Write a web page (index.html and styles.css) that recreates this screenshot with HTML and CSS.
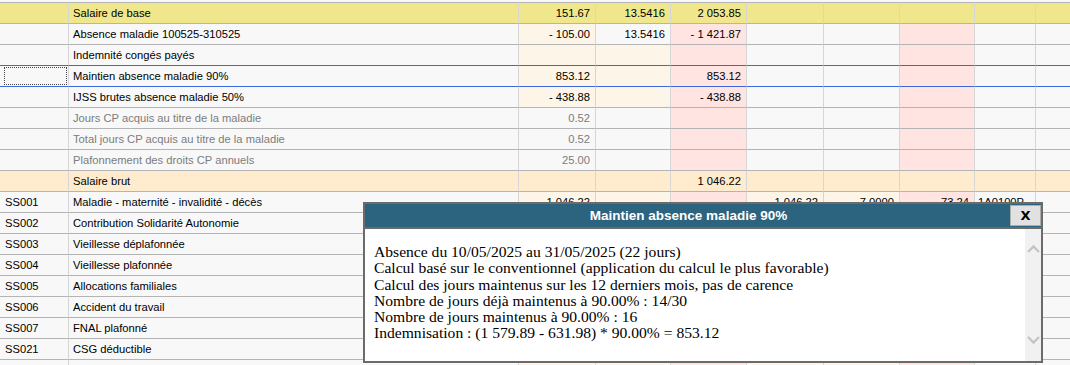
FILE: index.html
```html
<!DOCTYPE html>
<html lang="fr">
<head>
<meta charset="utf-8">
<title>Bulletin</title>
<link rel="stylesheet" href="styles.css">
</head>
<body>
<div class="page">
<table class="grid">
  <colgroup>
    <col class="w-code"><col class="w-label"><col class="w-n1"><col class="w-n2"><col class="w-n3"><col class="w-n4"><col class="w-n5"><col class="w-n6"><col class="w-n7"><col class="w-n8">
  </colgroup>
  <tbody>
    <tr class="r-yellow r-first">
      <td></td><td class="lbl">Salaire de base</td><td class="num">151.67</td><td class="num">13.5416</td><td class="num">2 053.85</td><td></td><td></td><td></td><td></td><td></td>
    </tr>
    <tr>
      <td></td><td class="lbl">Absence maladie 100525-310525</td><td class="num cream">- 105.00</td><td class="num">13.5416</td><td class="num pink">- 1 421.87</td><td></td><td></td><td class="pink"></td><td></td><td></td>
    </tr>
    <tr class="r-before-sel">
      <td></td><td class="lbl">Indemnité congés payés</td><td class="cream"></td><td class="cream"></td><td class="pink"></td><td></td><td></td><td class="pink"></td><td></td><td></td>
    </tr>
    <tr class="r-sel">
      <td><span class="focus"></span></td><td class="lbl">Maintien absence maladie 90%</td><td class="num cream">853.12</td><td class="cream"></td><td class="num pink">853.12</td><td></td><td></td><td class="pink"></td><td></td><td></td>
    </tr>
    <tr>
      <td></td><td class="lbl">IJSS brutes absence maladie 50%</td><td class="num cream">- 438.88</td><td class="cream"></td><td class="num pink">- 438.88</td><td></td><td></td><td class="pink"></td><td></td><td></td>
    </tr>
    <tr class="r-grey">
      <td></td><td class="lbl">Jours CP acquis au titre de la maladie</td><td class="num">0.52</td><td></td><td class="pink"></td><td></td><td></td><td class="pink"></td><td></td><td></td>
    </tr>
    <tr class="r-grey">
      <td></td><td class="lbl">Total jours CP acquis au titre de la maladie</td><td class="num">0.52</td><td></td><td class="pink"></td><td></td><td></td><td class="pink"></td><td></td><td></td>
    </tr>
    <tr class="r-grey">
      <td></td><td class="lbl">Plafonnement des droits CP annuels</td><td class="num">25.00</td><td></td><td class="pink"></td><td></td><td></td><td class="pink"></td><td></td><td></td>
    </tr>
    <tr class="r-almond">
      <td></td><td class="lbl">Salaire brut</td><td></td><td></td><td class="num">1 046.22</td><td></td><td></td><td></td><td></td><td></td>
    </tr>
    <tr>
      <td class="code">SS001</td><td class="lbl">Maladie - maternité - invalidité - décès</td><td class="num cream">1 046.22</td><td class="cream"></td><td class="pink"></td><td class="num cream">1 046.22</td><td class="num cream">7.0000</td><td class="num pink">73.24</td><td class="org">1A0100P</td><td></td>
    </tr>
    <tr>
      <td class="code">SS002</td><td class="lbl">Contribution Solidarité Autonomie</td><td class="cream"></td><td class="cream"></td><td class="pink"></td><td class="cream"></td><td class="cream"></td><td class="pink"></td><td></td><td></td>
    </tr>
    <tr>
      <td class="code">SS003</td><td class="lbl">Vieillesse déplafonnée</td><td class="cream"></td><td class="cream"></td><td class="pink"></td><td class="cream"></td><td class="cream"></td><td class="pink"></td><td></td><td></td>
    </tr>
    <tr>
      <td class="code">SS004</td><td class="lbl">Vieillesse plafonnée</td><td class="cream"></td><td class="cream"></td><td class="pink"></td><td class="cream"></td><td class="cream"></td><td class="pink"></td><td></td><td></td>
    </tr>
    <tr>
      <td class="code">SS005</td><td class="lbl">Allocations familiales</td><td class="cream"></td><td class="cream"></td><td class="pink"></td><td class="cream"></td><td class="cream"></td><td class="pink"></td><td></td><td></td>
    </tr>
    <tr>
      <td class="code">SS006</td><td class="lbl">Accident du travail</td><td class="cream"></td><td class="cream"></td><td class="pink"></td><td class="cream"></td><td class="cream"></td><td class="pink"></td><td></td><td></td>
    </tr>
    <tr>
      <td class="code">SS007</td><td class="lbl">FNAL plafonné</td><td class="cream"></td><td class="cream"></td><td class="pink"></td><td class="cream"></td><td class="cream"></td><td class="pink"></td><td></td><td></td>
    </tr>
    <tr>
      <td class="code">SS021</td><td class="lbl">CSG déductible</td><td class="cream"></td><td class="cream"></td><td class="pink"></td><td class="cream"></td><td class="cream"></td><td class="pink"></td><td></td><td></td>
    </tr>
    <tr>
      <td class="code"></td><td class="lbl"></td><td class="cream"></td><td class="cream"></td><td class="pink"></td><td class="cream"></td><td class="cream"></td><td class="pink"></td><td></td><td></td>
    </tr>
  </tbody>
</table>

<div class="dialog">
  <div class="dlg-head">
    <div class="dlg-title">Maintien absence maladie 90%</div>
    <div class="dlg-close">X</div>
  </div>
  <div class="dlg-body">
    <div class="dlg-text">
      Absence du 10/05/2025 au 31/05/2025 (22 jours)<br>
      Calcul basé sur le conventionnel (application du calcul le plus favorable)<br>
      Calcul des jours maintenus sur les 12 derniers mois, pas de carence<br>
      Nombre de jours déjà maintenus à 90.00% : 14/30<br>
      Nombre de jours maintenus à 90.00% : 16<br>
      Indemnisation : (1 579.89 - 631.98) * 90.00% = 853.12
    </div>
    <div class="scrollbar">
      <svg class="chev" width="17" height="14" viewBox="0 0 17 14"><path d="M3 10 L8.5 4.5 L14 10" fill="none" stroke="#c4c4c4" stroke-width="2.4"/></svg>
      <svg class="chev" width="17" height="14" viewBox="0 0 17 14"><path d="M3 4 L8.5 9.5 L14 4" fill="none" stroke="#c4c4c4" stroke-width="2.4"/></svg>
    </div>
  </div>
</div>
</div>
</body>
</html>
```
FILE: styles.css
```css
html, body {
  margin: 0;
  padding: 0;
  background: #f8f8f8;
}
.page {
  position: relative;
  width: 1070px;
  height: 365px;
  overflow: hidden;
  padding-top: 2px;
  box-sizing: border-box;
  font-family: "Liberation Sans", Arial, sans-serif;
  font-size: 11.2px;
  color: #000;
}
.grid {
  border-collapse: separate;
  border-spacing: 0;
  table-layout: fixed;
  width: 1070px;
}
.w-code { width: 69px; }
.w-label { width: 450px; }
.w-n1 { width: 77px; }
.w-n2 { width: 75px; }
.w-n3 { width: 76px; }
.w-n4 { width: 77px; }
.w-n5 { width: 76px; }
.w-n6 { width: 75px; }
.w-n7 { width: 61px; }
.w-n8 { width: 34px; }
.grid td {
  height: 20px;
  padding: 0 4px;
  box-sizing: content-box;
  border-bottom: 1px solid #b4b4b4;
  border-right: 1px solid #d6d6d6;
  white-space: nowrap;
  overflow: hidden;
  vertical-align: middle;
  background: #f8f8f8;
}
.grid td:last-child { border-right: none; }
.grid .r-first td { border-top: 1px solid #b4b4b4; }
.grid td.num { text-align: right; padding-right: 5px; }
.grid td.code { padding-left: 5px; }
.grid td.org { padding-left: 3px; }
.grid td.cream { background: #fdf6e8; }
.grid td.pink { background: #ffe4e1; }
.r-yellow td, .r-yellow td.pink, .r-yellow td.cream { background: #f0e68c; }
.r-almond td, .r-almond td.pink, .r-almond td.cream { background: #ffebcd; }
.r-grey td { color: #7c7c7c; }
.grid .r-before-sel td { border-bottom-color: #3d68dc; }
.grid .r-sel td { border-bottom-color: #3d68dc; position: relative; }
.focus {
  position: absolute;
  left: 4px;
  top: 1px;
  right: 1px;
  bottom: 1px;
  border: 1px dotted #444;
}

.dialog {
  position: absolute;
  left: 363px;
  top: 202px;
  width: 680px;
  height: 161px;
  box-sizing: border-box;
  border: 2px solid #6b6b6b;
  background: #fff;
  display: flex;
  flex-direction: column;
}
.dlg-head {
  height: 23px;
  background: #2c6480;
  display: flex;
  align-items: stretch;
  border-bottom: 2px solid #6b6b6b;
}
.dlg-title {
  flex: 1;
  display: flex;
  align-items: center;
  justify-content: center;
  color: #fff;
  font-weight: bold;
  font-size: 13.5px;
  font-family: "Liberation Sans", Arial, sans-serif;
  padding-left: 2px;
}
.dlg-close {
  width: 29px;
  margin: 1px 0 1px 0;
  background: #e1e1e1;
  border: 1px solid #adadad;
  display: flex;
  align-items: center;
  justify-content: center;
  font-weight: bold;
  font-size: 13px;
  font-family: "DejaVu Sans", Verdana, sans-serif;
  color: #000;
}
.dlg-body {
  flex: 1;
  display: flex;
}
.dlg-text {
  flex: 1;
  padding: 15px 9px 0 9px;
  font-family: "Liberation Serif", "Times New Roman", serif;
  font-size: 15.6px;
  line-height: 16.3px;
  color: #000;
}
.scrollbar {
  width: 16px;
  background: #f1f1f1;
  display: flex;
  flex-direction: column;
  justify-content: space-between;
  align-items: center;
  padding: 13px 0 14px 0;
}
.chev { display: block; }
```
